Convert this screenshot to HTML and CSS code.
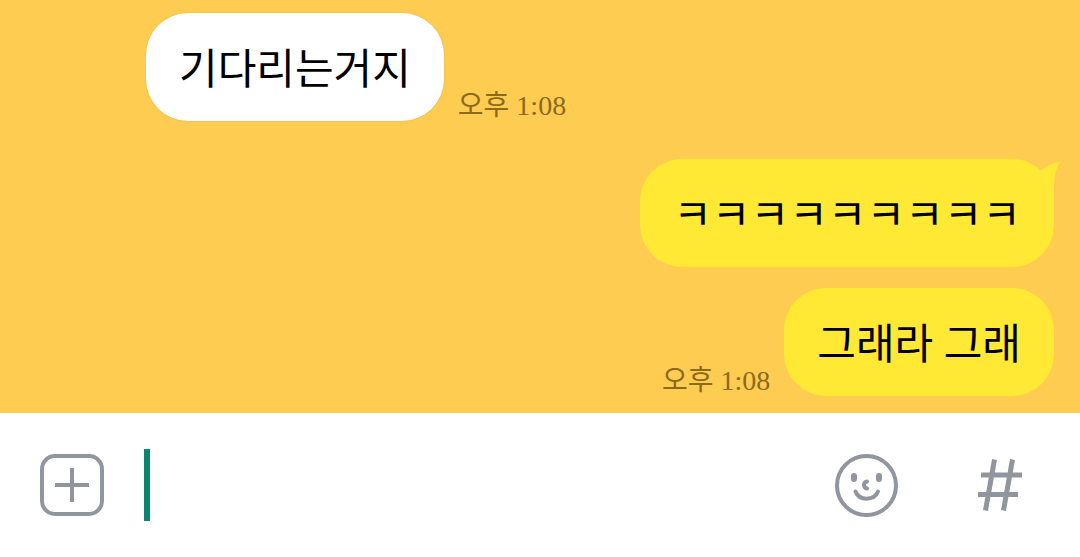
FILE: index.html
```html
<!DOCTYPE html>
<html lang="ko">

<head>
    <meta charset="UTF-8">
    <meta name="viewport" content="width=device-width, initial-scale=1.0">
    <title>채팅</title>
    <link rel="stylesheet" href="styles.css">
</head>

<body>
    <main class="chat">
        <div class="message received">
            <p class="bubble">기다리는거지</p>
            <time class="time">오후 1:08</time>
        </div>
        <div class="group">
            <div class="message sent">
                <p class="bubble">ㅋㅋㅋㅋㅋㅋㅋㅋㅋ
                    <svg class="tail" viewBox="0 0 24 44" aria-hidden="true">
                        <path d="M0 44V14L5 12C10 7 16 4 24 3C20 9 18 16 18 28V44Z" />
                    </svg>
                </p>
            </div>
            <div class="message sent">
                <time class="time">오후 1:08</time>
                <p class="bubble">그래라 그래</p>
            </div>
        </div>
    </main>

    <form class="inputBar">
        <button class="iconBtn" type="button" aria-label="첨부">
            <svg width="64" height="66" viewBox="0 0 64 66">
                <rect x="2" y="4" width="60" height="58" rx="13" />
                <path d="M15 33H49M32 16V50" />
            </svg>
        </button>
        <div class="field">
            <span class="cursor"></span>
            <input class="textInput" type="text" aria-label="메시지 입력">
        </div>
        <button class="iconBtn" type="button" aria-label="이모티콘">
            <svg width="64" height="66" viewBox="0 0 64 66">
                <circle cx="32.5" cy="33.5" r="29.5" />
                <path class="eye" d="M20 24V27M45 24V27" />
                <path class="smile" d="M33 29.5C29 30.5 29 35.5 33 36.5M21.5 39.5C25 49 40 49 44 39.5" />
            </svg>
        </button>
        <button class="iconBtn hashBtn" type="button" aria-label="샵검색">
            <svg width="48" height="66" viewBox="0 0 48 66">
                <path class="hash" d="M18.5 7.5L9.5 58.5M36.5 7.5L27.5 58.5M5 23H46M2 42.5H42" />
            </svg>
        </button>
    </form>
</body>

</html>
```
FILE: styles.css
```css
* {
    box-sizing: border-box;
}

body {
    display: flex;
    flex-direction: column;
    min-height: 100vh;
    margin: 0;
    background: #ffcc52;
    font-family: "Liberation Serif", "Noto Sans CJK KR", serif;
}

.chat {
    flex: 1;
    display: flex;
    flex-direction: column;
    justify-content: flex-end;
    gap: 38px;
    padding: 12px 26px 17px;
}

.group {
    display: flex;
    flex-direction: column;
    gap: 21px;
}

.message {
    display: flex;
    align-items: flex-end;
    gap: 14px;
}

/* Leaves room for the profile picture column */
.received {
    padding-left: 120px;
}

.sent {
    justify-content: flex-end;
}

.bubble {
    position: relative;
    margin: 0;
    padding: 27px 33px 21px;
    border-radius: 42px;
    background: #ffe934;
    color: #000;
    font-size: 42px;
    line-height: 60px;
}

.received .bubble {
    background: #fff;
    box-shadow: 0 0 2px rgba(120, 80, 0, 0.2);
}

.tail {
    position: absolute;
    top: 0;
    right: -6px;
    width: 24px;
    height: 44px;
    fill: #ffe934;
}

.time {
    color: #8c6a1a;
    font-size: 28px;
    line-height: 30px;
}

/* Bottom bar */
.inputBar {
    display: flex;
    align-items: center;
    height: 144px;
    padding: 0 56px 0 40px;
    background: #fff;
}

.iconBtn {
    display: flex;
    padding: 0;
    border: none;
    background: none;
    cursor: pointer;
}

.iconBtn svg {
    fill: none;
    stroke: #91959d;
    stroke-width: 4;
}

.hashBtn {
    margin-left: 78px;
}

.iconBtn .eye {
    stroke-width: 6;
    stroke-linecap: round;
}

.iconBtn .smile {
    stroke-linecap: round;
}

.iconBtn .hash {
    stroke-width: 5;
}

.field {
    flex: 1;
    display: flex;
    height: 72px;
    margin: 0 40px;
}

.cursor {
    width: 6px;
    background: #0a8572;
}

.textInput {
    flex: 1;
    min-width: 0;
    padding: 0 8px;
    border: none;
    outline: none;
    background: none;
    font-family: inherit;
    font-size: 42px;
}
```
